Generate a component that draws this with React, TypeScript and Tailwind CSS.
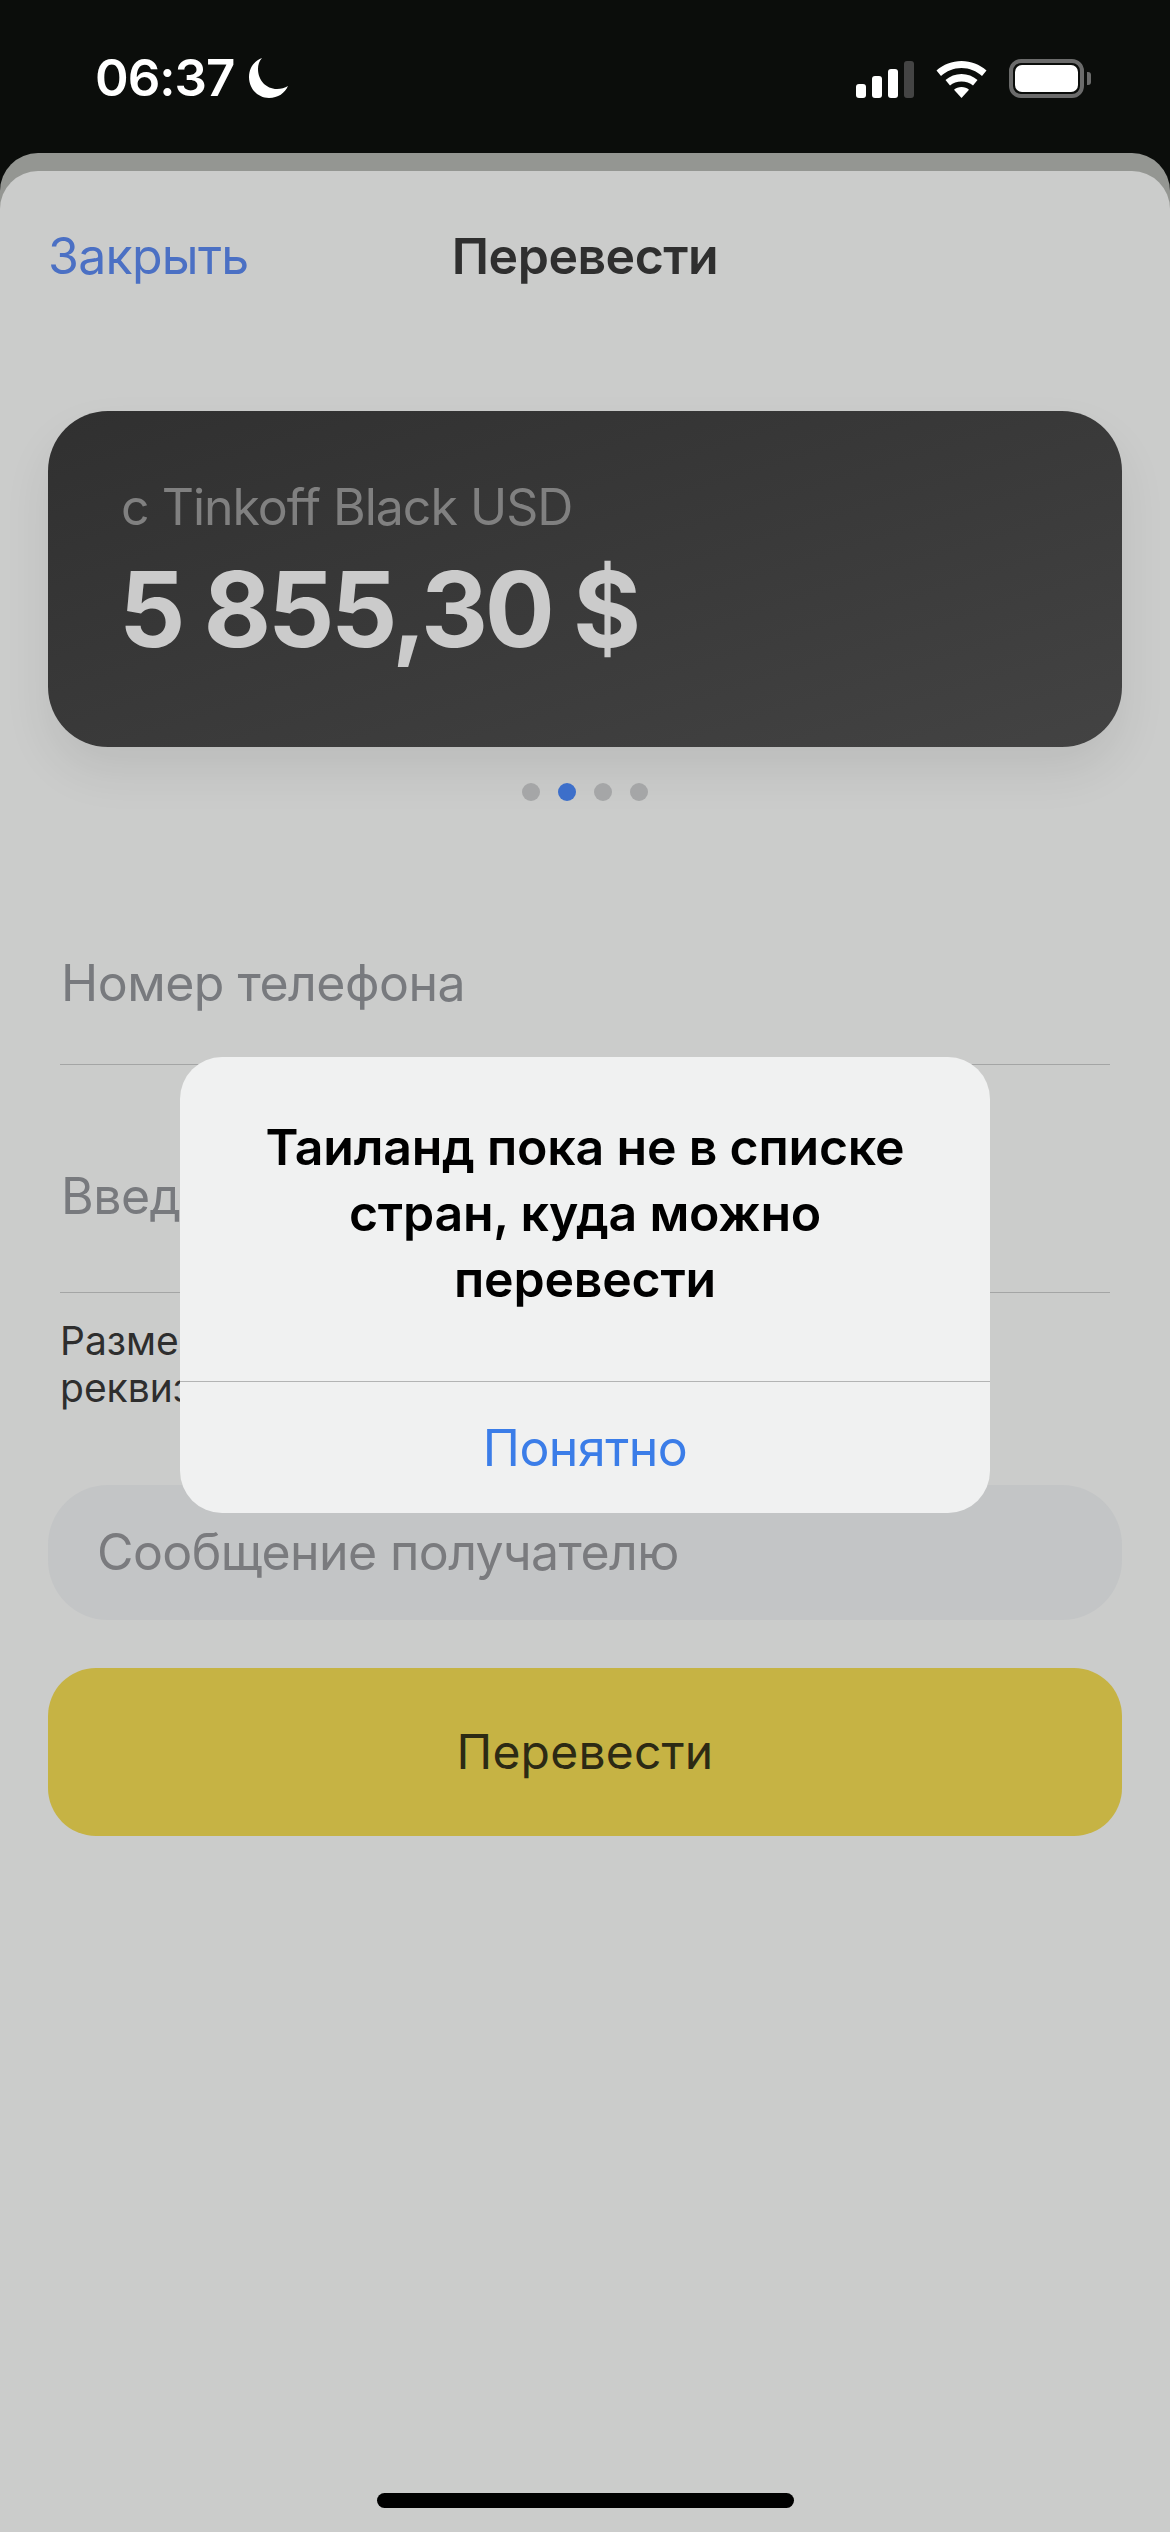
import type { ReactNode } from "react";

const dots = ["bg-[#a5a6a7]", "bg-[#3d6fca]", "bg-[#a5a6a7]", "bg-[#a5a6a7]"];
const signalBars = [
  { height: "h-[14px]", color: "bg-white" },
  { height: "h-[22px]", color: "bg-white" },
  { height: "h-[29px]", color: "bg-white" },
  { height: "h-[37px]", color: "bg-[#444444]" },
];

function StatusBar() {
  return (
    <div className="flex h-[153px] items-start justify-between bg-[#0b0d0b] pl-[95px] pr-[79px] pt-[53px]">
      <div className="flex items-center gap-[15px]">
        <span className="text-[51px] font-semibold leading-[50px] tracking-[-1px] text-white">06:37</span>
        <svg width="39" height="40" viewBox="0 0 39 40" fill="white">
          <path d="M13 0C5 3 0 10 0 19c0 12 9 21 20 21 9 0 16-5 19-12-3 2-7 3-11 3C17 31 9 22 9 11c0-4 1-8 4-11z" />
        </svg>
      </div>
      <div className="flex items-end pt-[6px]">
        <div className="flex items-end gap-[6px]">
          {signalBars.map((bar) => (
            <div key={bar.height} className={`w-[10px] rounded-[3px] ${bar.height} ${bar.color}`} />
          ))}
        </div>
        <svg className="ml-[22px]" width="51" height="37" viewBox="0 0 51 37" fill="white">
          <path d="M25.5 0C16 0 7.5 3.5.5 9.500L5 15C10.5 10 17.5 7 25.500 7S40.500 10 46 15L50.500 9.500C43.500 3.500 35 0 25.500 0Z" />
          <path d="M25.500 13C19.500 13 14 15.200 9.500 19L14 24.500C17 22 21 20.500 25.500 20.500S34 22 37 24.500L41.500 19C37 15.200 31.500 13 25.500 13Z" />
          <path d="M25.500 26C22.500 26 20 27 18 28.700L25.500 37L33 28.700C31 27 28.500 26 25.500 26Z" />
        </svg>
        <div className="ml-[22px] flex items-center">
          <div className="h-[39px] w-[75px] rounded-[12px] border-[4px] border-[#6b6b6b] p-[2px]">
            <div className="h-full w-full rounded-[7px] bg-white" />
          </div>
          <div className="ml-[3px] h-[13px] w-[4px] rounded-r-[3px] bg-[#6b6b6b]" />
        </div>
      </div>
    </div>
  );
}

function Field({ children, className }: { children: ReactNode; className: string }) {
  return (
    <div className={`mx-[12px] flex items-center border-b border-[#a4a5a5] pl-px text-[50px] tracking-[-0.5px] text-[#787a7e] ${className}`}>
      {children}
    </div>
  );
}

export default function App() {
  return (
    <div className="relative flex min-h-[2532px] w-[1170px] flex-col bg-[#0b0d0b] font-['Inter',sans-serif]">
      <StatusBar />
      <div className="flex flex-1 flex-col rounded-t-[38px] bg-[#949692] pt-[18px]">
        <div className="flex flex-1 flex-col rounded-t-[38px] bg-[#cbcccb] px-[48px]">
          <div className="relative flex h-[170px] items-center justify-center">
            <span className="absolute left-0 text-[50px] tracking-[-0.7px] text-[#4b70c4]">Закрыть</span>
            <span className="text-[50px] font-semibold tracking-[-0.5px] text-[#2f2f2f]">Перевести</span>
          </div>

          <div className="mt-[70px] h-[336px] rounded-[60px] bg-gradient-to-br from-[#303030] to-[#434343] pl-[73px] pt-[64px] shadow-[0_24px_48px_rgba(0,0,0,0.08)]">
            <div className="text-[50px] leading-[64px] tracking-[-1px] text-[#808080]">с Tinkoff Black USD</div>
            <div className="-ml-[2px] mt-[18px] text-[104px] font-bold leading-[104px] tracking-[-3.3px] text-[#cbcbcb]">5 855,30 $</div>
          </div>

          <div className="mt-[36px] flex justify-center gap-[18px]">
            {dots.map((color, i) => (
              <div key={i} className={`h-[18px] w-[18px] rounded-full ${color}`} />
            ))}
          </div>

          <Field className="mt-[101px] h-[163px]">Номер телефона</Field>
          <Field className="h-[228px] pt-[36px]">Введ</Field>

          <div className="mx-[12px] mt-[24px] whitespace-nowrap text-[39px] leading-[47px] text-[#2e2e2e]">
            <div>Разме</div>
            <div>реквиз</div>
          </div>

          <div className="mt-[74px] flex h-[135px] items-center rounded-[60px] bg-[#c3c5c6] pl-[49px] text-[50px] tracking-[-0.6px] text-[#7a7b7e]">
            Сообщение получателю
          </div>
          <div className="mt-[48px] flex h-[168px] items-center justify-center rounded-[48px] bg-[#c6b344] text-[48px] tracking-[0.2px] text-[#2c2a14]">
            Перевести
          </div>

          <div className="mx-auto mb-[24px] mt-auto h-[15px] w-[417px] rounded-full bg-black" />
        </div>
      </div>

      <div className="absolute left-[180px] top-[1057px] w-[810px] rounded-[42px] bg-[#f0f1f1]">
        <div className="flex h-[324px] flex-col items-center pt-[57px] text-center text-[50px] font-semibold leading-[66px] tracking-[-0.2px] text-black">
          <div>Таиланд пока не в списке</div>
          <div>стран, куда можно</div>
          <div>перевести</div>
        </div>
        <div className="flex h-[132px] items-center justify-center border-t border-[#b3b4b4] pt-[2px] text-[50px] tracking-[-0.5px] text-[#3b7de8]">
          Понятно
        </div>
      </div>
    </div>
  );
}
